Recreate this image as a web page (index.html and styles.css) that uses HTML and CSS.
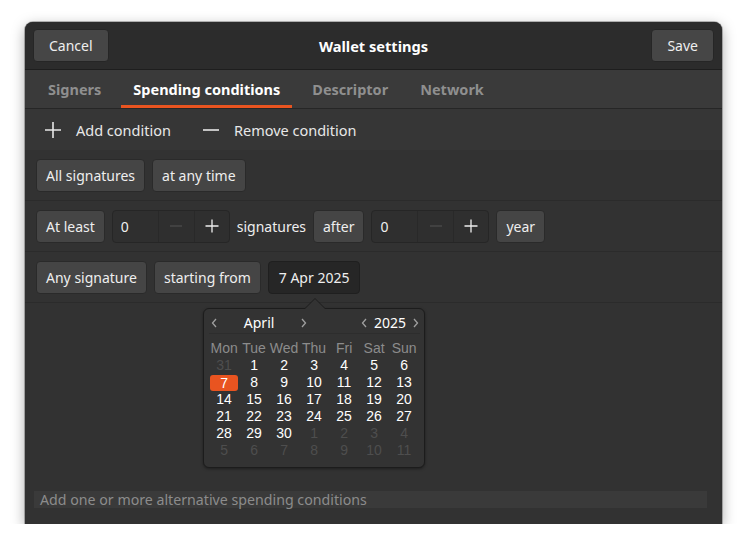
FILE: index.html
```html
<!DOCTYPE html>
<html>
<head>
<meta charset="utf-8">
<link rel="stylesheet" href="styles.css">
</head>
<body>
<div class="window">
  <header class="headerbar">
    <button class="btn hb-btn">Cancel</button>
    <div class="title">Wallet settings</div>
    <button class="btn hb-btn hb-end">Save</button>
  </header>
  <nav class="tabs">
    <div class="tab">Signers</div>
    <div class="tab active">Spending conditions</div>
    <div class="tab">Descriptor</div>
    <div class="tab">Network</div>
  </nav>
  <div class="toolbar">
    <div class="tool">
      <svg class="ticon" width="18" height="18" viewBox="0 0 18 18"><path d="M9 1v16M1 9h16" stroke="#e8e8e8" stroke-width="1.6" fill="none"/></svg>
      <span>Add condition</span>
    </div>
    <div class="tool">
      <svg class="ticon" width="18" height="18" viewBox="0 0 18 18"><path d="M1 9h16" stroke="#e8e8e8" stroke-width="1.6" fill="none"/></svg>
      <span>Remove condition</span>
    </div>
  </div>
  <main class="content">
    <div class="row">
      <button class="btn">All signatures</button>
      <button class="btn">at any time</button>
    </div>
    <div class="row">
      <button class="btn">At least</button>
      <div class="spin">
        <span class="spin-val">0</span>
        <span class="spin-btn dim"><svg width="14" height="14" viewBox="0 0 14 14"><path d="M1 7h12" stroke="currentColor" stroke-width="1.2"/></svg></span>
        <span class="spin-btn"><svg width="14" height="14" viewBox="0 0 14 14"><path d="M7 0.5v13M0.5 7h13" stroke="currentColor" stroke-width="1.3"/></svg></span>
      </div>
      <span class="label">signatures</span>
      <button class="btn">after</button>
      <div class="spin">
        <span class="spin-val">0</span>
        <span class="spin-btn dim"><svg width="14" height="14" viewBox="0 0 14 14"><path d="M1 7h12" stroke="currentColor" stroke-width="1.2"/></svg></span>
        <span class="spin-btn"><svg width="14" height="14" viewBox="0 0 14 14"><path d="M7 0.5v13M0.5 7h13" stroke="currentColor" stroke-width="1.3"/></svg></span>
      </div>
      <button class="btn">year</button>
    </div>
    <div class="row">
      <button class="btn">Any signature</button>
      <button class="btn">starting from</button>
      <div class="date-wrap">
        <button class="btn date-btn">7 Apr 2025</button>
        <div class="popover">
          <div class="arrow"></div>
          <div class="cal-head">
            <span class="nav"><svg width="6" height="10" viewBox="0 0 6 10"><path d="M5 1L1.5 5L5 9" stroke="currentColor" stroke-width="1.3" fill="none"/></svg></span>
            <span class="month">April</span>
            <span class="nav"><svg width="6" height="10" viewBox="0 0 6 10"><path d="M1 1L4.5 5L1 9" stroke="currentColor" stroke-width="1.3" fill="none"/></svg></span>
            <span class="spacer"></span>
            <span class="nav"><svg width="6" height="10" viewBox="0 0 6 10"><path d="M5 1L1.5 5L5 9" stroke="currentColor" stroke-width="1.3" fill="none"/></svg></span>
            <span class="year">2025</span>
            <span class="nav"><svg width="6" height="10" viewBox="0 0 6 10"><path d="M1 1L4.5 5L1 9" stroke="currentColor" stroke-width="1.3" fill="none"/></svg></span>
          </div>
          <div class="cal-grid">
            <span class="dn">Mon</span><span class="dn">Tue</span><span class="dn">Wed</span><span class="dn">Thu</span><span class="dn">Fri</span><span class="dn">Sat</span><span class="dn">Sun</span>
            <span class="o">31</span><span>1</span><span>2</span><span>3</span><span>4</span><span>5</span><span>6</span>
            <span class="sel">7</span><span>8</span><span>9</span><span>10</span><span>11</span><span>12</span><span>13</span>
            <span>14</span><span>15</span><span>16</span><span>17</span><span>18</span><span>19</span><span>20</span>
            <span>21</span><span>22</span><span>23</span><span>24</span><span>25</span><span>26</span><span>27</span>
            <span>28</span><span>29</span><span>30</span><span class="o">1</span><span class="o">2</span><span class="o">3</span><span class="o">4</span>
            <span class="o">5</span><span class="o">6</span><span class="o">7</span><span class="o">8</span><span class="o">9</span><span class="o">10</span><span class="o">11</span>
          </div>
        </div>
      </div>
    </div>
    <div class="fill"></div>
    <div class="hint">Add one or more alternative spending conditions</div>
  </main>
</div>
</body>
</html>
```

FILE: styles.css
```css
* { box-sizing: border-box; }
html, body {
  margin: 0;
  padding: 0;
  background: #ffffff;
}
body {
  font-family: "Noto Sans", "DejaVu Sans", sans-serif;
  font-size: 14px;
  color: #eeeeee;
  padding: 22px 25px 0 25px;
}
.window {
  width: 697px;
  height: 502px;
  background: #333333;
  border-radius: 8px 8px 0 0;
  box-shadow: 0 4px 14px rgba(0,0,0,0.35), 0 0 0 1px rgba(0,0,0,0.25);
  display: flex;
  flex-direction: column;
}
.headerbar {
  height: 48px;
  background: #2c2c2c;
  border-radius: 8px 8px 0 0;
  border-bottom: 1px solid #1e1e1e;
  display: grid;
  grid-template-columns: 1fr auto 1fr;
  align-items: center;
  padding: 0 8px;
}
.title {
  font-weight: bold;
  font-size: 14.6px;
  color: #ffffff;
}
.btn {
  font: inherit;
  color: #eeeeee;
  background: #454545;
  border: 1px solid #2a2a2a;
  border-radius: 4px;
  height: 33px;
  padding: 0 9px;
  display: inline-flex;
  align-items: center;
  white-space: nowrap;
}
.hb-btn {
  padding: 0 15px;
  background: #464646;
  border-color: #262626;
  justify-self: start;
}
.hb-end { justify-self: end; }
.tabs {
  height: 39px;
  background: #3a3a3a;
  border-bottom: 1px solid #262626;
  display: flex;
  align-items: stretch;
  padding: 0 0 0 11px;
  gap: 8px;
  font-size: 14.5px;
}
.tab {
  padding: 3px 12px 0 12px;
  display: flex;
  align-items: center;
  font-weight: bold;
  color: #8f8f8f;
  border-bottom: 3px solid transparent;
}
.tab.active {
  color: #ffffff;
  border-bottom-color: #e95420;
}
.toolbar {
  height: 41px;
  background: #363636;
  display: flex;
  align-items: center;
  padding: 0 0 0 19px;
  gap: 31px;
  font-size: 14.5px;
}
.tool {
  display: flex;
  align-items: center;
  gap: 14px;
  color: #e8e8e8;
}
.content {
  flex: 1;
  display: flex;
  flex-direction: column;
  background: #323232;
}
.row {
  height: 51px;
  display: flex;
  align-items: center;
  gap: 7px;
  padding: 0 11px;
  border-bottom: 1px solid #2b2b2b;
}
.label { color: #eeeeee; }
.spin {
  height: 33px;
  display: flex;
  align-items: stretch;
  background: #2f2f2f;
  border: 1px solid #262626;
  border-radius: 4px;
}
.spin-val {
  width: 46px;
  display: flex;
  align-items: center;
  padding-left: 8px;
  border-right: 1px solid #292929;
}
.spin-btn {
  width: 35px;
  display: flex;
  align-items: center;
  justify-content: center;
  color: #eeeeee;
}
.spin-btn + .spin-btn { border-left: 1px solid #292929; }
.spin-btn.dim { color: #4f4f4f; }
.date-wrap {
  position: relative;
}
.date-btn {
  background: #262626;
  border-color: #1f1f1f;
  padding: 0 10px;
}
.popover {
  position: absolute;
  left: 50%;
  margin-left: -111px;
  top: 47px;
  width: 222px;
  height: 160px;
  background: #333333;
  border: 1px solid #1c1c1c;
  border-radius: 6px;
  box-shadow: 0 1px 3px rgba(0,0,0,0.4);
  padding: 4px 4px 0 5px;
  z-index: 5;
}
.arrow {
  position: absolute;
  left: 100px;
  top: -11px;
  width: 0;
  height: 0;
  border-left: 11px solid transparent;
  border-right: 11px solid transparent;
  border-bottom: 11px solid #1c1c1c;
}
.arrow::after {
  content: "";
  position: absolute;
  left: -10px;
  top: 1px;
  border-left: 10px solid transparent;
  border-right: 10px solid transparent;
  border-bottom: 10px solid #333333;
}
.cal-head {
  height: 21px;
  display: flex;
  align-items: center;
  border-bottom: 1px solid #2d2d2d;
  color: #ffffff;
  font-size: 14px;
  line-height: 20px;
  padding: 0 0 0 1px;
}
.nav {
  color: #a0a0a0;
  width: 8px;
  display: flex;
  align-items: center;
  justify-content: center;
}
.month {
  width: 82px;
  text-align: center;
}
.year {
  width: 44px;
  text-align: center;
}
.spacer { flex: 1; }
.cal-grid {
  margin-top: 6px;
  display: grid;
  grid-template-columns: repeat(7, 30px);
  grid-auto-rows: 17px;
  font-family: "Liberation Sans", Arial, sans-serif;
  font-size: 14px;
  line-height: 16px;
  color: #ffffff;
}
.cal-grid span {
  display: flex;
  align-items: center;
  justify-content: center;
}
.cal-grid .dn { color: #8c8c8c; }
.cal-grid .o { color: #4e4e4e; }
.cal-grid .sel {
  background: #e95420;
  border-radius: 3px;
  margin: 1px 1px 0 1px;
}
.fill { flex: 1; }
.hint {
  margin: 0 15px 16px 9px;
  height: 17px;
  background: #3a3a3a;
  color: #8c8c8c;
  padding-left: 6px;
  font-size: 14.2px;
  line-height: 17px;
}
```
